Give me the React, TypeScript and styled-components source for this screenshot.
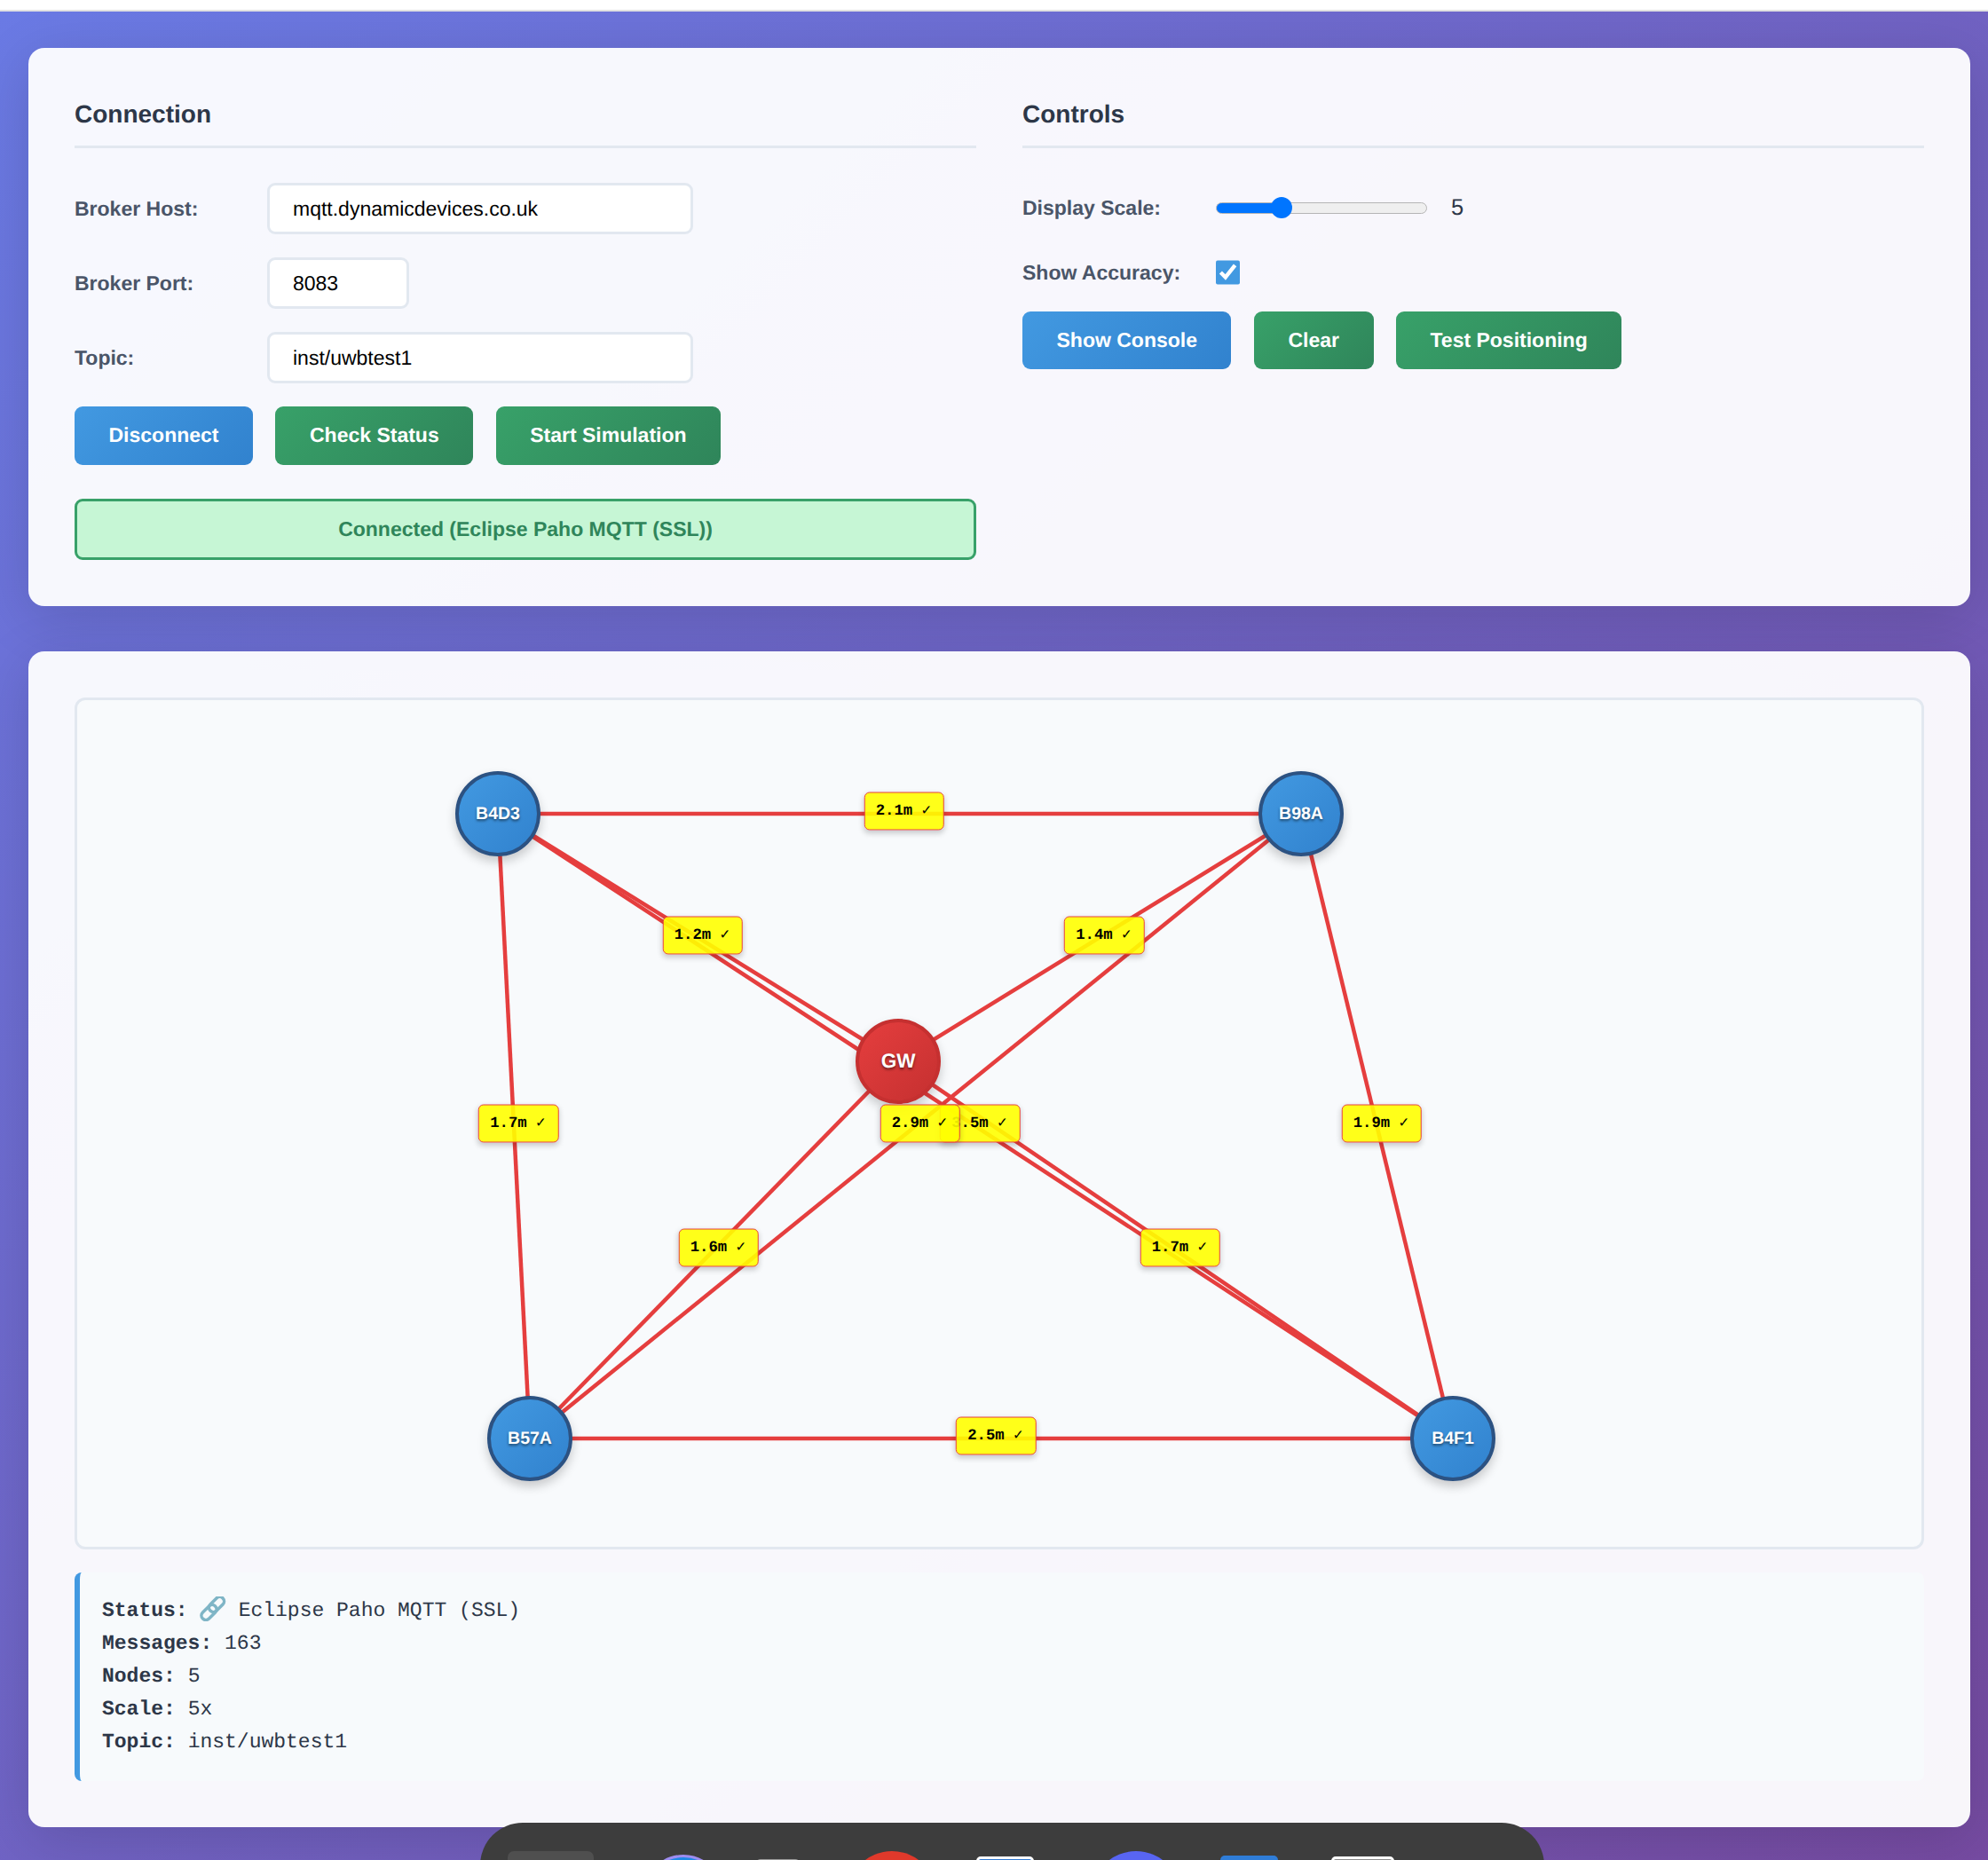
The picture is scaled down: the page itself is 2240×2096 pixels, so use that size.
import React from "react";
import styled, { createGlobalStyle } from "styled-components";

const Global = createGlobalStyle`
  html, body { margin: 0; padding: 0; background: #fff; height: 2096px; overflow: hidden; }
  * { box-sizing: border-box; text-rendering: geometricPrecision; }
  body { font-family: "Liberation Sans", Arial, sans-serif; }
`;

const Page = styled.div`
  position: relative;
  height: 2096px;
  overflow: hidden;
`;
const TopStrip = styled.div`
  height: 13px;
  background: #fff;
  border-bottom: 2px solid #e2e2e2;
`;
const Main = styled.main`
  height: 2083px;
  padding: 41px 20px 0 32px;
  background: linear-gradient(135deg, #6a7ae4 0%, #764ba2 100%);
  display: flex;
  flex-direction: column;
  gap: 51px;
`;
const Card = styled.section`
  background: rgba(255, 255, 255, 0.95);
  border-radius: 18px;
  padding: 52px;
  box-shadow: 0 14px 64px rgba(0, 0, 0, 0.14);
`;
const Columns = styled.div`
  display: grid;
  grid-template-columns: 1016px 1016px;
  gap: 52px;
`;
const Column = styled.div`
  display: flex;
  flex-direction: column;
`;
const Heading = styled.h2`
  margin: 0 0 39px;
  font-size: 28px;
  line-height: 45px;
  font-weight: 700;
  color: #2d3748;
  padding-bottom: 13px;
  border-bottom: 3px solid #e2e8f0;
`;
const Row = styled.div<{ $h?: number; $gap?: number }>`
  display: flex;
  align-items: center;
  height: ${(p) => p.$h ?? 57}px;
  margin-bottom: ${(p) => p.$gap ?? 27}px;
`;
const Label = styled.label`
  width: 217px;
  flex: none;
  padding-top: 1px;
  font-size: 23px;
  font-weight: 700;
  color: #4a5568;
`;
const ControlLabel = styled(Label)`
  width: 218px;
`;
const TextInput = styled.input<{ $w: number }>`
  width: ${(p) => p.$w}px;
  height: 58px;
  padding: 1px 26px 0;
  border: 3px solid #e2e8f0;
  border-radius: 9px;
  background: #fff;
  color: #000;
  font: 400 23px "Liberation Sans", Arial, sans-serif;
  outline: none;
`;
const Buttons = styled.div`
  display: flex;
  gap: 25.5px;
`;
const Button = styled.button<{ $kind: "blue" | "green" }>`
  height: 65.5px;
  padding: 0 38.5px;
  border: 0;
  border-radius: 9px;
  color: #fff;
  font: 700 23px "Liberation Sans", Arial, sans-serif;
  background: ${(p) =>
    p.$kind === "blue"
      ? "linear-gradient(135deg, #4299e1, #3182ce)"
      : "linear-gradient(135deg, #38a169, #2f855a)"};
`;
const StatusBar = styled.div`
  margin-top: 38px;
  height: 69px;
  display: flex;
  align-items: center;
  justify-content: center;
  border: 3px solid #38a169;
  border-radius: 9px;
  background: #c6f6d5;
  color: #2f855a;
  font-size: 23px;
  font-weight: 700;
`;
const Range = styled.input`
  -webkit-appearance: none;
  appearance: none;
  width: 238px;
  height: 28px;
  margin: 0;
  background: transparent;
  &::-webkit-slider-runnable-track {
    height: 13px;
    border-radius: 7px;
    border: 1.5px solid #b5b5b5;
    background: linear-gradient(90deg, #0075ff 0 31%, #efefef 31% 100%);
  }
  &::-webkit-slider-thumb {
    -webkit-appearance: none;
    width: 24px;
    height: 24px;
    margin-top: -7px;
    border-radius: 50%;
    background: #0075ff;
  }
`;
const RangeValue = styled.span`
  margin-left: 27px;
  font-size: 25.5px;
  color: #2d3748;
`;
const Check = styled.input`
  width: 27px;
  height: 28px;
  margin: 0;
  accent-color: #4299e1;
`;
const Canvas = styled.div`
  position: relative;
  height: 960px;
  border: 3px solid #e2e8f0;
  border-radius: 12px;
  background: #f8fafc;
`;
const Wires = styled.svg`
  position: absolute;
  inset: 0;
  width: 100%;
  height: 100%;
`;
const Node = styled.div<{ $x: number; $y: number; $gw?: boolean }>`
  position: absolute;
  left: ${(p) => p.$x - 48}px;
  top: ${(p) => p.$y - 48}px;
  width: 96px;
  height: 96px;
  padding-top: ${(p) => (p.$gw ? 0 : 1.5)}px;
  border-radius: 50%;
  display: flex;
  align-items: center;
  justify-content: center;
  border: 4.5px solid ${(p) => (p.$gw ? "#c53030" : "#2c5282")};
  background: ${(p) =>
    p.$gw
      ? "linear-gradient(135deg, #e53e3e, #c53030)"
      : "linear-gradient(135deg, #4299e1, #3182ce)"};
  box-shadow: 0 6px 12px rgba(0, 0, 0, 0.2);
  color: #fff;
  font-weight: 700;
  font-size: ${(p) => (p.$gw ? 22.5 : 19.5)}px;
  text-shadow: 0 1.5px 3px rgba(0, 0, 0, 0.5);
`;
const Tag = styled.div<{ $x: number; $y: number }>`
  position: absolute;
  left: ${(p) => p.$x}px;
  top: ${(p) => p.$y}px;
  transform: translate(-50%, -50%);
  height: 43px;
  width: 90.5px;
  padding: 9px 0 0 12.5px;
  border: 1.5px solid #e53e3e;
  border-radius: 6px;
  background: rgba(255, 255, 0, 0.9);
  box-shadow: 0 3px 6px rgba(0, 0, 0, 0.2);
  color: #000;
  font: 700 17.25px/24px "Liberation Mono", "DejaVu Sans Mono", monospace;
  white-space: pre;
`;
const Info = styled.div`
  margin-top: 26px;
  height: 235px;
  padding: 25px;
  border-left: 6px solid #4299e1;
  border-radius: 8px;
  background: #f7fafc;
  color: #2d3748;
  font: 400 23px/37px "Liberation Mono", monospace;
`;
const InfoLine = styled.div`
  white-space: pre;
`;
const LinkGlyph = styled.svg`
  display: inline-block;
  width: 29.4px;
  height: 28px;
  vertical-align: -6px;
`;
const Dock = styled.div`
  position: absolute;
  left: 541px;
  top: 2054px;
  width: 1199px;
  height: 120px;
  padding-left: 31px;
  border-radius: 48px 48px 0 0;
  background: #3d3d3d;
  display: flex;
  align-items: flex-start;
`;
const DockItem = styled.div<{
  $w: number;
  $h?: number;
  $ml: number;
  $mt: number;
  $bg: string;
  $r: string;
  $edge?: string;
}>`
  flex: none;
  width: ${(p) => p.$w}px;
  height: ${(p) => p.$h ?? p.$w}px;
  margin-left: ${(p) => p.$ml}px;
  margin-top: ${(p) => p.$mt}px;
  background: ${(p) => p.$bg};
  border-radius: ${(p) => p.$r};
  border: ${(p) => (p.$edge ? `3px solid ${p.$edge}` : "0")};
`;

const pts: Record<string, [number, number]> = {
  B4D3: [561, 917],
  B98A: [1466, 917],
  GW: [1012, 1196],
  B57A: [597, 1621],
  B4F1: [1637, 1621],
};
const links: [string, string, string][] = [
  ["B4D3", "B98A", "2.1m"],
  ["B4D3", "GW", "1.2m"],
  ["B98A", "GW", "1.4m"],
  ["B4D3", "B4F1", "3.5m"],
  ["B98A", "B57A", "2.9m"],
  ["GW", "B57A", "1.6m"],
  ["GW", "B4F1", "1.7m"],
  ["B4D3", "B57A", "1.7m"],
  ["B98A", "B4F1", "1.9m"],
  ["B57A", "B4F1", "2.5m"],
];
const OX = 87;
const OY = 789;

export default function App() {
  return (
    <Page>
      <Global />
      <TopStrip />
      <Main>
        <Card>
          <Columns>
            <Column>
              <Heading>Connection</Heading>
              <Row>
                <Label>Broker Host:</Label>
                <TextInput $w={480} defaultValue="mqtt.dynamicdevices.co.uk" />
              </Row>
              <Row>
                <Label>Broker Port:</Label>
                <TextInput $w={160} defaultValue="8083" />
              </Row>
              <Row>
                <Label>Topic:</Label>
                <TextInput $w={480} defaultValue="inst/uwbtest1" />
              </Row>
              <Buttons>
                <Button $kind="blue">Disconnect</Button>
                <Button $kind="green">Check Status</Button>
                <Button $kind="green">Start Simulation</Button>
              </Buttons>
              <StatusBar>Connected (Eclipse Paho MQTT (SSL))</StatusBar>
            </Column>
            <Column>
              <Heading>Controls</Heading>
              <Row $h={56}>
                <ControlLabel>Display Scale:</ControlLabel>
                <Range type="range" min={1} max={15} defaultValue={5} />
                <RangeValue>5</RangeValue>
              </Row>
              <Row $h={36} $gap={25.5}>
                <ControlLabel>Show Accuracy:</ControlLabel>
                <Check type="checkbox" defaultChecked />
              </Row>
              <Buttons>
                <Button $kind="blue">Show Console</Button>
                <Button $kind="green">Clear</Button>
                <Button $kind="green">Test Positioning</Button>
              </Buttons>
            </Column>
          </Columns>
        </Card>
        <Card>
          <Canvas>
            <Wires>
              {links.map(([a, b]) => (
                <line
                  key={a + b}
                  x1={pts[a][0] - OX}
                  y1={pts[a][1] - OY}
                  x2={pts[b][0] - OX}
                  y2={pts[b][1] - OY}
                  stroke="#e53e3e"
                  strokeWidth={4.5}
                />
              ))}
            </Wires>
            {Object.entries(pts).map(([n, [x, y]]) => (
              <Node key={n} $x={x - OX} $y={y - OY} $gw={n === "GW"}>
                {n}
              </Node>
            ))}
            {links.map(([a, b, d]) => (
              <Tag
                key={a + b + d}
                $x={(pts[a][0] + pts[b][0]) / 2 + 5 - OX}
                $y={(pts[a][1] + pts[b][1]) / 2 - 2.5 - OY}
              >
                {d} ✓
              </Tag>
            ))}
          </Canvas>
          <Info>
            <InfoLine>
              <strong>Status:</strong>{" "}
              <LinkGlyph viewBox="0 0 29.4 28">
                <g fill="none" stroke="#7fb5c6" strokeWidth="3.5">
                  <rect x="14" y="-1" width="10" height="20" rx="5" transform="rotate(45 19 9)" />
                  <rect x="5.5" y="8" width="10" height="20" rx="5" transform="rotate(45 10.5 18)" />
                </g>
              </LinkGlyph>{" "}
              Eclipse Paho MQTT (SSL)
            </InfoLine>
            <InfoLine>
              <strong>Messages:</strong> 163
            </InfoLine>
            <InfoLine>
              <strong>Nodes:</strong> 5
            </InfoLine>
            <InfoLine>
              <strong>Scale:</strong> 5x
            </InfoLine>
            <InfoLine>
              <strong>Topic:</strong> inst/uwbtest1
            </InfoLine>
          </Info>
        </Card>
      </Main>
      <Dock>
        <DockItem $w={97} $ml={0} $mt={32} $bg="#4f4f4f" $r="7px" />
        <DockItem $w={90} $ml={56} $mt={36} $bg="#1e88e5" $r="50%" $edge="#9d8cf0" />
        <DockItem $w={51} $ml={36} $mt={41} $bg="#9a9a9a" $r="6px" />
        <DockItem $w={100} $ml={53} $mt={32} $bg="#e0392b" $r="50%" />
        <DockItem $w={65} $h={80} $ml={45} $mt={38} $bg="#2f78d0" $r="5px" $edge="#ffffff" />
        <DockItem $w={100} $ml={65} $mt={32} $bg="#5865f2" $r="50%" />
        <DockItem $w={65} $h={80} $ml={45} $mt={37} $bg="#2f7dd8" $r="5px" />
        <DockItem $w={71} $h={80} $ml={60} $mt={38} $bg="#8a8a8a" $r="5px" $edge="#ffffff" />
      </Dock>
    </Page>
  );
}
